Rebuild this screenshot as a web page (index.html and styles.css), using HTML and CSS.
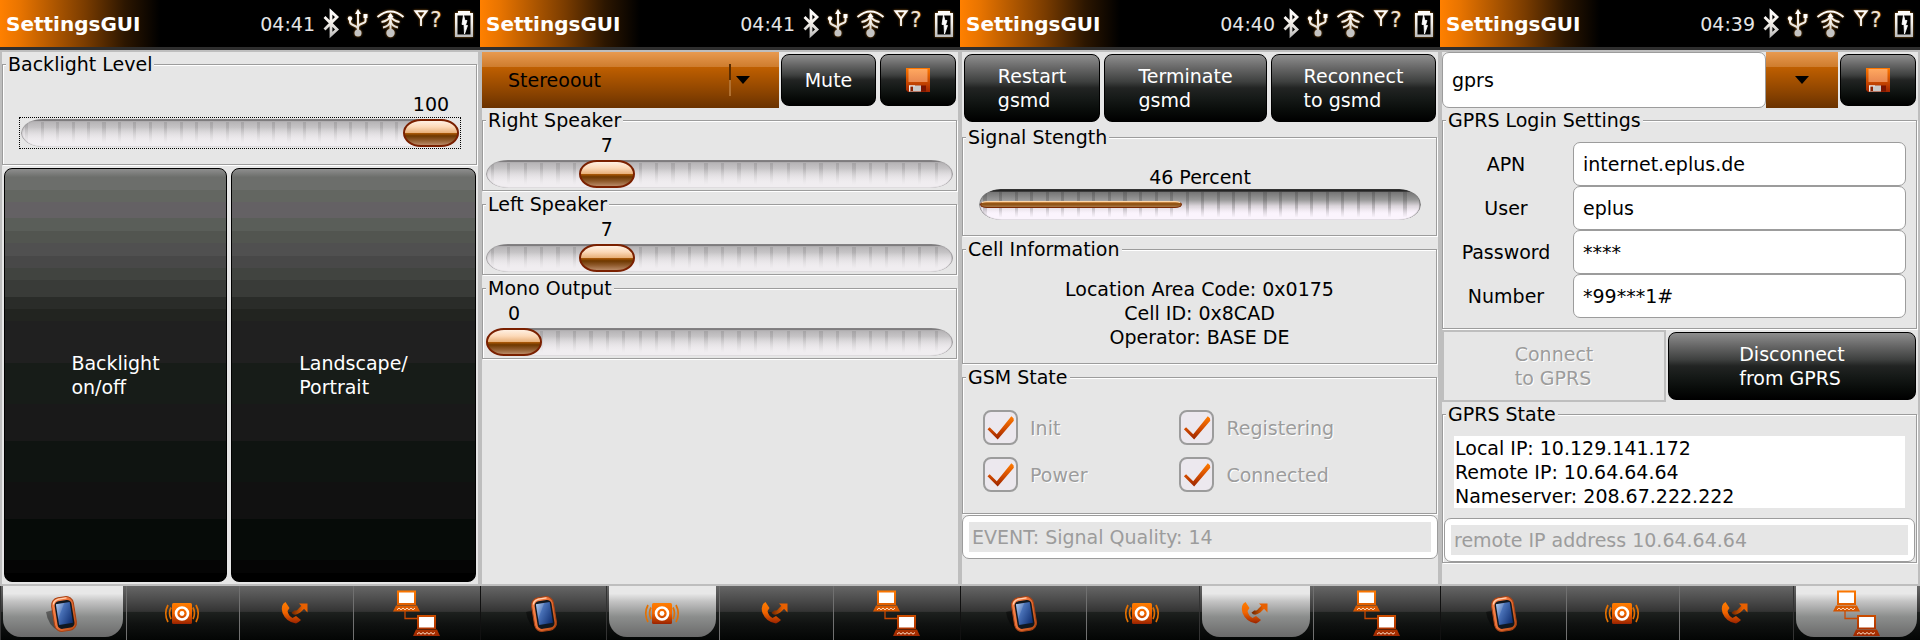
FILE: index.html
```html
<!DOCTYPE html>
<html lang="en">
<head>
<meta charset="utf-8">
<title>SettingsGUI</title>
<link rel="stylesheet" href="styles.css">
</head>
<body>
<svg class="defs" aria-hidden="true">
  <defs>
    <linearGradient id="gWhite" gradientUnits="userSpaceOnUse" x1="0" y1="10" x2="0" y2="37"><stop offset="0" stop-color="#fff"/><stop offset=".45" stop-color="#f4f0ea"/><stop offset="1" stop-color="#bbb"/></linearGradient>
    <linearGradient id="gOrange" x1="0" y1="0" x2="0" y2="1"><stop offset="0" stop-color="#ff7d00"/><stop offset=".5" stop-color="#f06400"/><stop offset="1" stop-color="#992200"/></linearGradient>
    <linearGradient id="gNet" gradientUnits="userSpaceOnUse" x1="0" y1="3" x2="0" y2="50"><stop offset="0" stop-color="#ff7a00"/><stop offset="1" stop-color="#a02800"/></linearGradient>
    <linearGradient id="gArrow" x1="0" y1="0" x2="1" y2="0"><stop offset="0" stop-color="#7a2c00"/><stop offset="1" stop-color="#e86000"/></linearGradient>
    <linearGradient id="gScreen" x1="0" y1="0" x2="1" y2="1"><stop offset="0" stop-color="#a9c3ea"/><stop offset=".35" stop-color="#4a72b8"/><stop offset="1" stop-color="#0c2a6c"/></linearGradient>
    <linearGradient id="gCase" x1="0" y1="0" x2="1" y2="1"><stop offset="0" stop-color="#ff8a50"/><stop offset=".5" stop-color="#e87038"/><stop offset="1" stop-color="#b84a10"/></linearGradient>
    <linearGradient id="gDisk" x1="0" y1="0" x2="0" y2="1"><stop offset="0" stop-color="#ff7800"/><stop offset="1" stop-color="#a02400"/></linearGradient>
    <linearGradient id="gLabel" x1="0" y1="0" x2="0" y2="1"><stop offset="0" stop-color="#ffa860"/><stop offset="1" stop-color="#e88850"/></linearGradient>
  </defs>
  <symbol id="bt" viewBox="0 0 24 47"><path d="M5.500 17 18 29.500 12 35V11.500L18 17 5.500 29.500" fill="none" stroke="url(#gWhite)" stroke-width="2.800"/></symbol>
  <symbol id="usb" viewBox="0 0 29 47"><g fill="none" stroke="url(#gWhite)" stroke-width="2"><path d="M15.010 12 15 32M7 19V22C7 26 15 25 15 29M22.500 17V21C22.500 24 15 23 15 27"/></g><path d="M15 9 18 14H12Z" fill="#fff"/><circle cx="7" cy="18.500" r="2.200" fill="#fff"/><path d="M20.500 14h4v4h-4z" fill="#fff"/><circle cx="15" cy="33" r="3.500" fill="#c4c4c4"/></symbol>
  <symbol id="wifi" viewBox="0 0 37 47"><g fill="none" stroke="url(#gWhite)" stroke-width="2"><path d="M5.500 17Q18.500 6 31.500 17M9.500 22Q16 21 18.500 16Q21 21 27.500 22M11 27.500Q17 26.500 18.500 21Q20 26.500 26 27.500"/><path d="M18.510 14 18.500 32"/></g><path d="M18.500 13 21.500 17H15.500Z" fill="#fff"/><circle cx="18.500" cy="33" r="4.200" fill="#c4c4c4"/></symbol>
  <symbol id="ant" viewBox="0 0 20 47"><path d="M6.500 11.200H17.500L12 18.500ZM12 18V26" fill="none" stroke="url(#gWhite)" stroke-width="2"/></symbol>
  <symbol id="bat" viewBox="0 0 32 47"><path d="M10 11H22V13H25V37H7V13H10Z" fill="url(#gWhite)"/><path d="M9.500 15.500H22.500V34.500H9.500Z" fill="#000"/><path d="M15.500 15 14 24.500H16L16.500 34L19.500 25.500H17.500L19 20.500H17Z" fill="#fff" stroke="#fff" stroke-width=".8"/></symbol>

  <symbol id="phone" viewBox="0 0 40 54"><path d="M3 26 10 24 22 44 16 45Q5 40 3 26Z" fill="#000" opacity=".4"/><g transform="rotate(-9 21 28)"><rect x="10" y="11" width="22" height="34" rx="7.500" fill="url(#gCase)" stroke="#a84214"/><path d="M12 17Q13 13 18 12.500H26" stroke="#ffd0b0" stroke-width="1.300" fill="none"/><rect x="13" y="14.500" width="17" height="28" rx="4.500" fill="#101820"/><rect x="14.500" y="17" width="14" height="21" fill="url(#gScreen)"/><path d="M14.500 17H23L14.500 32Z" fill="#fff" opacity=".14"/></g></symbol>
  <symbol id="sound" viewBox="0 0 40 54"><rect x="10" y="17" width="20" height="21" rx="1.500" fill="url(#gOrange)"/><circle cx="20" cy="27.500" r="6" fill="none" stroke="#fff" stroke-width="2.600"/><circle cx="20" cy="27.500" r="2.400" fill="#fff"/><path d="M9 21.500Q6 27.500 9 33M6 19Q1.500 27.500 6 36M31 21.500Q34 27.500 31 33M34 19Q38.500 27.500 34 36" fill="none" stroke="#e47000" stroke-width="1.700"/></symbol>
  <symbol id="call" viewBox="0 0 40 54"><path d="M9.500 16Q4 19 6.500 27Q10 36 20 37.500Q22 37 25 34L20 30L16.500 32Q12.500 30 11.500 25L13.500 22Z" fill="url(#gOrange)"/><path d="M17 25.500Q19 28 23 25L27 21" fill="none" stroke="url(#gArrow)" stroke-width="4"/><path d="M23 17.500H31.500V26.500Z" fill="#e86000"/></symbol>
  <symbol id="net" viewBox="0 0 50 54"><g fill="url(#gNet)"><path d="M6 4.500H25V19H6ZM5 19.500H26L29 25.500H2ZM26 29H45V43H26ZM25 43.500H46L49 50H22Z"/></g><path d="M8 6.500H23V17H8ZM28 31H43V41.500H28Z" fill="#fff"/><path d="M6 23.800 8 22 10 23.800 12 22 14 23.800 16 22 18 23.800 20 22 22 23.800 24 22M26 48.200 28 46.500 30 48.200 32 46.500 34 48.200 36 46.500 38 48.200 40 46.500 42 48.200 44 46.500" fill="none" stroke="#ffe0c8" stroke-width="1"/><path d="M14 25V32.500H26" fill="none" stroke="#c84800" stroke-width="1.300"/></symbol>
  <symbol id="disk" viewBox="0 0 24 24"><path d="M0 0H24V24H2L0 22Z" fill="url(#gDisk)"/><path d="M2.500 1H21.500V14H2.500Z" fill="url(#gLabel)"/><path d="M15 17.500H20V23.500H15Z" fill="#7a1400"/><path d="M3 17.500H15V23.500H3Z" fill="#c8c8c8"/><path d="M4.500 18.500H7V23H4.500Z" fill="#8a2000"/><path d="M3 17.500H9V18.200H3.700V23.500H3Z" fill="#fff"/></symbol>
</svg>

<main class="screens">
  <section class="screen">
    <header class="topbar"><h1>SettingsGUI</h1><span class="clock">04:41</span><svg class="w24"><use href="#bt"/></svg><svg class="w29"><use href="#usb"/></svg><svg class="w37"><use href="#wifi"/></svg><svg class="w20"><use href="#ant"/></svg><span class="query">?</span><svg class="w32"><use href="#bat"/></svg></header>
    <div class="content">
      <fieldset class="group roomy">
        <legend>Backlight Level</legend>
        <div class="scale"><div class="rail"><output style="left: 100%">100</output></div>
        <input class="slider focus" type="range" min="0" max="100" value="100" aria-label="Backlight Level"></div>
      </fieldset>
      <div class="tiles">
        <button class="btn tall"><span>Backlight<br>on/off</span></button>
        <button class="btn tall"><span>Landscape/<br>Portrait</span></button>
      </div>
    </div>
    <nav class="tabs"><button class="tab active" aria-label="Device"><svg class="w40"><use href="#phone"/></svg></button><button class="tab" aria-label="Sound"><svg class="w40"><use href="#sound"/></svg></button><button class="tab" aria-label="Phone"><svg class="w40"><use href="#call"/></svg></button><button class="tab" aria-label="Network"><svg class="w50"><use href="#net"/></svg></button></nav>
  </section>

  <section class="screen">
    <header class="topbar"><h1>SettingsGUI</h1><span class="clock">04:41</span><svg class="w24"><use href="#bt"/></svg><svg class="w29"><use href="#usb"/></svg><svg class="w37"><use href="#wifi"/></svg><svg class="w20"><use href="#ant"/></svg><span class="query">?</span><svg class="w32"><use href="#bat"/></svg></header>
    <div class="content">
      <div class="toolbar sound-bar">
        <div class="picker"><select aria-label="Output"><option>Stereoout</option></select><i class="divider"></i><i class="arrow"></i></div>
        <button class="btn">Mute</button>
        <button class="btn" aria-label="Save"><svg class="disk"><use href="#disk"/></svg></button>
      </div>
      <fieldset class="group tight">
        <legend>Right Speaker</legend>
        <div class="scale"><div class="rail"><output style="left: 22.6%">7</output></div>
        <input class="slider" type="range" min="0" max="31" value="7" aria-label="Right Speaker"></div>
      </fieldset>
      <fieldset class="group tight">
        <legend>Left Speaker</legend>
        <div class="scale"><div class="rail"><output style="left: 22.6%">7</output></div>
        <input class="slider" type="range" min="0" max="31" value="7" aria-label="Left Speaker"></div>
      </fieldset>
      <fieldset class="group tight">
        <legend>Mono Output</legend>
        <div class="scale"><div class="rail"><output style="left: 0%">0</output></div>
        <input class="slider" type="range" min="0" max="31" value="0" aria-label="Mono Output"></div>
      </fieldset>
    </div>
    <nav class="tabs"><button class="tab" aria-label="Device"><svg class="w40"><use href="#phone"/></svg></button><button class="tab active" aria-label="Sound"><svg class="w40"><use href="#sound"/></svg></button><button class="tab" aria-label="Phone"><svg class="w40"><use href="#call"/></svg></button><button class="tab" aria-label="Network"><svg class="w50"><use href="#net"/></svg></button></nav>
  </section>

  <section class="screen">
    <header class="topbar"><h1>SettingsGUI</h1><span class="clock">04:40</span><svg class="w24"><use href="#bt"/></svg><svg class="w29"><use href="#usb"/></svg><svg class="w37"><use href="#wifi"/></svg><svg class="w20"><use href="#ant"/></svg><span class="query">?</span><svg class="w32"><use href="#bat"/></svg></header>
    <div class="content">
      <div class="toolbar gsm-bar">
        <button class="btn"><span>Restart<br>gsmd</span></button>
        <button class="btn"><span>Terminate<br>gsmd</span></button>
        <button class="btn"><span>Reconnect<br>to gsmd</span></button>
      </div>
      <fieldset class="group signal">
        <legend>Signal Stength</legend>
        <label for="signal">46 Percent</label>
        <progress id="signal" max="100" value="46"></progress>
      </fieldset>
      <fieldset class="group cell">
        <legend>Cell Information</legend>
        <p>Location Area Code: 0x0175<br>Cell ID: 0x8CAD<br>Operator: BASE DE</p>
      </fieldset>
      <fieldset class="group state">
        <legend>GSM State</legend>
        <label><input type="checkbox" checked disabled>Init</label>
        <label><input type="checkbox" checked disabled>Registering</label>
        <label><input type="checkbox" checked disabled>Power</label>
        <label><input type="checkbox" checked disabled>Connected</label>
      </fieldset>
      <input class="entry status" type="text" value="EVENT: Signal Quality: 14" aria-label="Event" disabled>
    </div>
    <nav class="tabs"><button class="tab" aria-label="Device"><svg class="w40"><use href="#phone"/></svg></button><button class="tab" aria-label="Sound"><svg class="w40"><use href="#sound"/></svg></button><button class="tab active" aria-label="Phone"><svg class="w40"><use href="#call"/></svg></button><button class="tab" aria-label="Network"><svg class="w50"><use href="#net"/></svg></button></nav>
  </section>

  <section class="screen">
    <header class="topbar"><h1>SettingsGUI</h1><span class="clock">04:39</span><svg class="w24"><use href="#bt"/></svg><svg class="w29"><use href="#usb"/></svg><svg class="w37"><use href="#wifi"/></svg><svg class="w20"><use href="#ant"/></svg><span class="query">?</span><svg class="w32"><use href="#bat"/></svg></header>
    <div class="content">
      <div class="toolbar net-bar">
        <input class="entry" type="text" value="gprs" aria-label="Connection">
        <button class="drop" aria-label="Choose connection"><i class="arrow"></i></button>
        <button class="btn" aria-label="Save"><svg class="disk"><use href="#disk"/></svg></button>
      </div>
      <fieldset class="group login">
        <legend>GPRS Login Settings</legend>
        <label for="apn">APN</label><input class="entry" id="apn" type="text" value="internet.eplus.de">
        <label for="user">User</label><input class="entry" id="user" type="text" value="eplus">
        <label for="pass">Password</label><input class="entry" id="pass" type="text" value="****">
        <label for="num">Number</label><input class="entry" id="num" type="text" value="*99***1#">
      </fieldset>
      <div class="toolbar link-bar">
        <button class="flat" disabled><span>Connect<br>to GPRS</span></button>
        <button class="btn"><span>Disconnect<br>from GPRS</span></button>
      </div>
      <fieldset class="group info">
        <legend>GPRS State</legend>
        <textarea rows="3" aria-label="GPRS State" readonly>Local IP: 10.129.141.172
Remote IP: 10.64.64.64
Nameserver: 208.67.222.222</textarea>
        <input class="entry status" type="text" value="remote IP address 10.64.64.64" aria-label="Last message" disabled>
      </fieldset>
    </div>
    <nav class="tabs"><button class="tab" aria-label="Device"><svg class="w40"><use href="#phone"/></svg></button><button class="tab" aria-label="Sound"><svg class="w40"><use href="#sound"/></svg></button><button class="tab" aria-label="Phone"><svg class="w40"><use href="#call"/></svg></button><button class="tab active" aria-label="Network"><svg class="w50"><use href="#net"/></svg></button></nav>
  </section>
</main>
</body>
</html>
```

FILE: styles.css
```css
* { box-sizing: border-box; }
body { margin: 0; background: #e6e6e6; }
body, button, input, select, textarea { font: 19px/24px "DejaVu Sans", sans-serif; color: #000; }
button, input, select, textarea { margin: 0; padding: 0; border: 0; }
svg { display: block; flex: none; }
.defs { position: absolute; width: 0; height: 0; }
.w20 { width: 20px; height: 47px; }
.w24 { width: 24px; height: 47px; }
.w29 { width: 29px; height: 47px; }
.w32 { width: 32px; height: 47px; }
.w37 { width: 37px; height: 47px; }
.w40 { width: 40px; height: 54px; }
.w50 { width: 50px; height: 54px; }
.disk { width: 24px; height: 24px; }

.screens { display: grid; grid-template-columns: repeat(4, 1fr); min-height: 100vh; }
.screen { display: flex; flex-direction: column; min-width: 0; }

/* title and status icons */
.topbar {
  display: flex; align-items: center; height: 50px; padding-left: 6px;
  border-bottom: 3px solid #2e2e2e;
  background: linear-gradient(90deg, #ff8000 0, #e87400 20px, #7a3c00 85px, #2c1600 125px, #000 160px);
}
.topbar h1 { flex: 1; margin: 0; font-size: 20px; line-height: 24px; color: #fff; }
.topbar svg { filter: drop-shadow(0 0 1px #a86818); }
.topbar svg.w24 { filter: none; }
.clock { margin-right: 4px; color: #e6e6e6; }
.query { width: 19px; padding: 0 0 8px 1px; font-size: 22px; color: #f0e4d4; text-shadow: 0 0 2px #a86818; }

.content {
  flex: 1; display: flex; flex-direction: column;
  border: 2px solid #bebebe; background: #e6e6e6;
}

/* etched frames; --inset is the left padding, which the title is set back by */
.group {
  --inset: 0px;
  min-width: 0; margin: 0 1px 1px 0; padding: 0 0 0 var(--inset);
  border: 1px solid #9c9c9c;
  box-shadow: 1px 1px 0 #fff, inset 1px 1px 0 #fff;
}
.group legend { margin-left: calc(3px - var(--inset)); padding: 0 2px; background: #e6e6e6; line-height: 24px; }
.roomy { --inset: 18px; padding: 16px 17px 17px var(--inset); }
.tight { --inset: 3px; padding: 1px 3px 2px var(--inset); }

/* sliders */
.scale { display: flex; flex-direction: column; gap: 3px; }
.rail { height: 24px; margin: 0 28px; }
.rail output { display: block; position: relative; width: 56px; margin-left: -28px; text-align: center; }
.slider { appearance: none; display: block; width: 100%; height: 28px; background: none; }
.slider::-webkit-slider-runnable-track {
  height: 28px; border-radius: 22px / 14px;
  box-shadow: inset 1px 0 1px #9a989a, inset -1px 0 1px #9a989a;
  background:
    linear-gradient(#7e7c7e 0 2px, #b0aeb0 2px 3px, transparent 3px 30%, #f0edf0 88%),
    repeating-linear-gradient(90deg, transparent 0 1%, rgba(70, 70, 70, .16) 1% 1.7%, transparent 1.7% 3.52%),
    linear-gradient(#aeacae, #d2d0d2 45%, #f0edf0 85%);
}
.slider::-webkit-slider-thumb {
  appearance: none; width: 56px; height: 28px;
  border: 2px solid #7a2000; border-radius: 18px / 14px;
  background: linear-gradient(#fff0e2 0, #fcd9b8 25%, #e9b27c 48%, #b05c08 50%, #6e3800 62%, #8f5a2c 80%, #b98a66 100%);
}
.focus { outline: 1px dotted #000; outline-offset: 1px; }

/* buttons */
.btn {
  display: flex; align-items: center; justify-content: center; margin: 2px;
  border: 1px solid #000; border-radius: 8px; color: #fff; text-align: left;
  background: linear-gradient(#8e8e8e, #666 20%, #3f4140 40%, #222423 50%, #161a18 65%, #080b09 85%, #000);
}
.tiles { flex: 1; display: grid; grid-template-columns: 227fr 249fr; }
.tall {
  background: linear-gradient(#8e8e8e, #6c6e6b 2%, #6c6e6b 5%, #636661 5% 8%, #646164 8% 12%, #5a5e59 12% 15%, #525550 15% 18%, #505050 18% 21%, #484848 21% 24%, #414440 24% 27%, #393b38 27% 31%, #2a2c29 31% 34%, #222420 34% 37%, #202020 37% 47%, #171c18 47% 57%, #191919 57% 66%, #0f1411 66% 76%, #111 76% 85%, #060b08 85% 95%, #050505 95% 98%, #000 98%);
}
.flat {
  display: flex; align-items: center; justify-content: center; text-align: left;
  border: 2px solid #bebebe; background: #e6e6e6; color: #9c9c9c; text-shadow: 1px 1px 0 #fff;
}
.toolbar { display: grid; }
.sound-bar { height: 56px; grid-template-columns: 1fr 99px 80px; }
.gsm-bar { height: 72px; grid-template-columns: 140fr 167fr 169fr; }
.net-bar { height: 56px; grid-template-columns: 1fr 72px 80px; }
.link-bar { height: 72px; grid-template-columns: 224fr 252fr; }

.picker { position: relative; display: grid; }
.picker select, .drop {
  appearance: none; border-radius: 0;
  background: linear-gradient(#e89a50, #cf7d2e 26%, #bf5f00 27%, #944800 65%, #6a3200);
}
.picker select { padding-left: 26px; }
.divider { position: absolute; right: 48px; top: 12px; width: 2px; height: 32px; background: linear-gradient(#5a2c00 50%, #b07030 50%); }
.arrow { width: 14px; height: 8px; background: #000; clip-path: polygon(0 0, 100% 0, 50% 100%); }
.picker .arrow { position: absolute; right: 29px; top: 24px; }
.drop { display: flex; align-items: center; justify-content: center; }

/* text boxes */
.entry {
  width: 100%; min-width: 0; height: 44px; padding: 6px; text-indent: 3px;
  border: 1px solid #9c9c9c; border-radius: 7px; background: #fff;
}
.net-bar .entry { height: 56px; }
.status { color: #9c9c9c; background: linear-gradient(#e6e6e6, #e6e6e6) content-box, #fff; }

/* phone network */
.signal { --inset: 16px; margin-top: 1px; padding: 16px 15px 15px var(--inset); }
.signal label, .cell p { display: block; margin: 0; text-align: center; }
progress {
  appearance: none; display: block; width: 100%; height: 31px;
  overflow: hidden; border: 0; border-radius: 22px / 16px;
}
progress::-webkit-progress-bar {
  padding: 12px 1px; border-radius: 22px / 16px;
  box-shadow: inset 1px 0 1px #777, inset -1px 0 1px #777;
  background:
    linear-gradient(#242424 0 2px, #555 3px, transparent 3px 60%, #fbf4fd 92%),
    repeating-linear-gradient(90deg, transparent 0 1%, rgba(40, 40, 40, .22) 1% 1.7%, transparent 1.7% 3.52%),
    linear-gradient(#666, #999 35%, #dcd6dc 55%, #fbf4fd 80%);
}
progress::-webkit-progress-value {
  border: 1px solid #7a2800; border-top-color: #ffd8a8; border-radius: 8px / 4px;
  background: linear-gradient(#d89858, #8a4a08 35%, #a87848);
}
.cell { padding: 16px 0 14px; }
.state { --inset: 16px; display: grid; grid-template-columns: 4fr 5fr; padding: 15px 15px 15px var(--inset); }
.state label { display: flex; align-items: center; gap: 12px; height: 47px; color: #9c9c9c; text-shadow: 1px 1px 0 #fff; }
.state input {
  appearance: none; flex: none; width: 35px; height: 35px; margin-left: 4px;
  border: 2px solid #9c9c9c; border-radius: 8px; background: #ece8ee;
}
.state input::before {
  content: ""; display: block; height: 100%;
  background: linear-gradient(#ff7c00 15%, #d85000 50%, #a02800 85%);
  clip-path: polygon(8% 56%, 15% 49%, 38% 72%, 85% 14%, 92% 20%, 93% 28%, 41% 89%);
}

/* data network */
.login { --inset: 13px; display: grid; grid-template-columns: 100px 1fr; column-gap: 17px; align-items: center; padding: 10px 10px 10px var(--inset); }
.login label { text-align: center; }
.info { --inset: 1px; padding: 10px 1px 0 var(--inset); }
.info textarea {
  display: block; width: calc(100% - 20px); margin: 0 10px 10px; padding-left: 1px;
  overflow: hidden; resize: none; background: #fff;
}

/* tab bar */
.tabs { display: grid; grid-template-columns: 126fr 113fr 114fr 127fr; height: 54px; }
.tab {
  display: flex; justify-content: center; overflow: hidden; padding-right: 2px;
  border-left: 1px solid #707070;
  background: linear-gradient(#666, #4c4c4c 25%, #343434 47%, #1d201e 49%, #101211 70%, #030504);
}
.tab:first-child { border-left-color: #111; }
.tab.active { position: relative; isolation: isolate; border-left-color: #333; }
.tab.active::before {
  content: ""; position: absolute; z-index: -1; inset: 0 3px 3px 2px;
  border-radius: 0 0 18px 18px;
  background: linear-gradient(#e8e8e8 15%, #c4c4c4 30%, #8c8e8d 60%, #6a6a6a 100%);
}
```
